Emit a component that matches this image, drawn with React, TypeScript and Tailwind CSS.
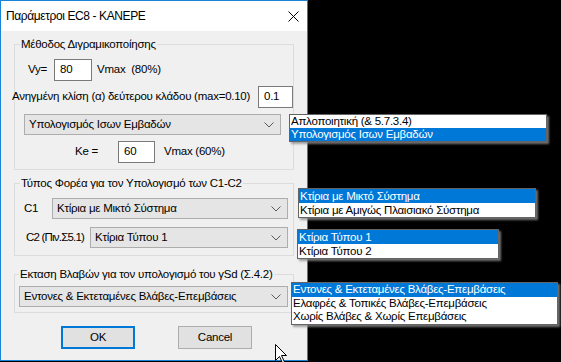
import React from "react";

const Chevron = () => (
  <svg width="10" height="6" viewBox="0 0 10 6" className="shrink-0">
    <path d="M0.5 0.5 L5 5 L9.5 0.5" fill="none" stroke="#5a5a5a" strokeWidth="1" />
  </svg>
);

const Combo = ({ text, className }: { text: string; className: string }) => (
  <div
    className={
      "h-[21px] flex items-center justify-between bg-[#e5e5e5] border border-[#adadad] pl-[4px] pr-[6px] " +
      className
    }
  >
    <span className="whitespace-nowrap">{text}</span>
    <Chevron />
  </div>
);

const Field = ({ text, className }: { text: string; className: string }) => (
  <div className={"h-[22px] bg-white border border-[#7a7a7a] flex items-center pl-[5px] " + className}>
    {text}
  </div>
);

const Popup = ({
  items,
  sel,
  className,
  row,
}: {
  items: string[];
  sel: number;
  className: string;
  row: string;
}) => (
  <div
    className={
      "absolute bg-white border border-[#646464] shadow-[2px_2px_2px_rgba(140,140,140,0.8)] flex flex-col " +
      className
    }
  >
    {items.map((t, i) => (
      <div
        key={t}
        className={
          row +
          (i === sel
            ? " pl-[1px] bg-[#0078d7] text-white whitespace-nowrap"
            : " pl-[1px] text-black whitespace-nowrap")
        }
      >
        {t}
      </div>
    ))}
  </div>
);

export default function App() {
  return (
    <div className="relative w-[561px] h-[362px] bg-black overflow-hidden text-[11.5px] tracking-[-0.25px] text-black font-['Liberation_Sans',Arial,sans-serif]">
      <div className="w-[308px] h-[361px] border border-[#1883d7] bg-[#f0f0f0] flex flex-col">
        {/* title bar */}
        <div className="h-[30px] bg-white flex items-center justify-between pl-[5px] pr-[8px]">
          <span className="text-[12px] tracking-[-0.4px]">Παράμετροι EC8 - KANEPE</span>
          <svg width="11" height="11" viewBox="0 0 11 11">
            <path d="M0.5 0.5 L10.5 10.5 M10.5 0.5 L0.5 10.5" stroke="#000" strokeWidth="1" />
          </svg>
        </div>
        {/* body */}
        <div className="flex flex-col px-[13px]">
          <fieldset className="mt-[6px] w-[280px] border border-[#dcdcdc] pb-[6px]">
            <legend className="ml-[5px] px-[1px] leading-[14px]">Μέθοδος Διγραμικοποίησης</legend>
            <div className="mt-[8px] ml-[13px] flex items-center">
              <span className="w-[26px]">Vy=</span>
              <Field text="80" className="w-[38px]" />
              <span className="ml-[5px] whitespace-pre">Vmax  (80%)</span>
            </div>
            <div className="mt-[5px] -ml-[3px] flex items-center justify-between">
              <span className="whitespace-nowrap">Ανηγμένη κλίση (α) δεύτερου κλάδου (max=0.10)</span>
              <Field text="0.1" className="w-[35px]" />
            </div>
            <Combo text="Υπολογισμός Ισων Εμβαδών" className="mt-[6px] ml-[9px] w-[257px]" />
            <div className="mt-[6px] ml-[60px] flex items-center">
              <span className="w-[43px]">Ke =</span>
              <Field text="60" className="w-[37px]" />
              <span className="ml-[9px]">Vmax (60%)</span>
            </div>
          </fieldset>

          <fieldset className="mt-[6px] w-[280px] border border-[#dcdcdc] pb-[7px]">
            <legend className="ml-[5px] px-[1px] leading-[14px]">
              Τύπος Φορέα για τον Υπολογισμό των C1-C2
            </legend>
            <div className="mt-[8px] ml-[9px] flex items-center">
              <span className="w-[28px]">C1</span>
              <Combo text="Κτίρια με Μικτό Σύστημα" className="w-[236px]" />
            </div>
            <div className="mt-[8px] ml-[11px] flex items-center">
              <span className="w-[64px] whitespace-nowrap tracking-[-0.8px]">C2 (Πιν.Σ5.1)</span>
              <Combo text="Κτίρια Τύπου 1" className="w-[198px]" />
            </div>
          </fieldset>

          <fieldset className="mt-[11px] w-[280px] border border-[#dcdcdc] pb-[5px]">
            <legend className="ml-[4px] px-[1px] leading-[14px] whitespace-nowrap">
              Εκταση Βλαβών για τον υπολογισμό του γSd (Σ.4.2)
            </legend>
            <Combo
              text="Εντονες & Εκτεταμένες Βλάβες-Επεμβάσεις"
              className="mt-[5px] ml-[4px] w-[269px]"
            />
          </fieldset>

          <div className="mt-[13px] ml-[47px] flex items-center">
            <div className="w-[74px] h-[23px] bg-[#e1e1e1] border-2 border-[#0078d7] flex items-center justify-center">
              OK
            </div>
            <div className="ml-[43px] w-[74px] h-[23px] bg-[#e1e1e1] border border-[#adadad] flex items-center justify-center">
              Cancel
            </div>
          </div>
        </div>
      </div>

      <Popup
        items={["Απλοποιητική (& 5.7.3.4)", "Υπολογισμός Ισων Εμβαδών"]}
        sel={1}
        row="h-[13px] leading-[13px]"
        className="left-[289px] top-[114px] w-[258px]"
      />
      <Popup
        items={["Κτίρια με Μικτό Σύστημα", "Κτίρια με Αμιγώς Πλαισιακό Σύστημα"]}
        sel={0}
        row="h-[14px] leading-[14px]"
        className="left-[298px] top-[188px] w-[238px]"
      />
      <Popup
        items={["Κτίρια Τύπου 1", "Κτίρια Τύπου 2"]}
        sel={0}
        row="h-[14px] leading-[14px]"
        className="left-[297px] top-[229px] w-[202px]"
      />
      <Popup
        items={[
          "Εντονες & Εκτεταμένες Βλάβες-Επεμβάσεις",
          "Ελαφρές & Τοπικές Βλάβες-Επεμβάσεις",
          "Χωρίς Βλάβες & Χωρίς Επεμβάσεις",
        ]}
        sel={0}
        row="h-[13.5px] leading-[13.5px]"
        className="left-[291px] top-[282px] w-[267px]"
      />

      <svg className="absolute left-[275px] top-[344px]" width="13" height="20" viewBox="0 0 13 20">
        <path
          d="M0.5 0.5 L0.5 16.5 L4.5 12.5 L7.5 19 L9.5 18 L6.5 11.5 L11.5 11.5 Z"
          fill="#fff"
          stroke="#000"
          strokeWidth="1"
        />
      </svg>
    </div>
  );
}
